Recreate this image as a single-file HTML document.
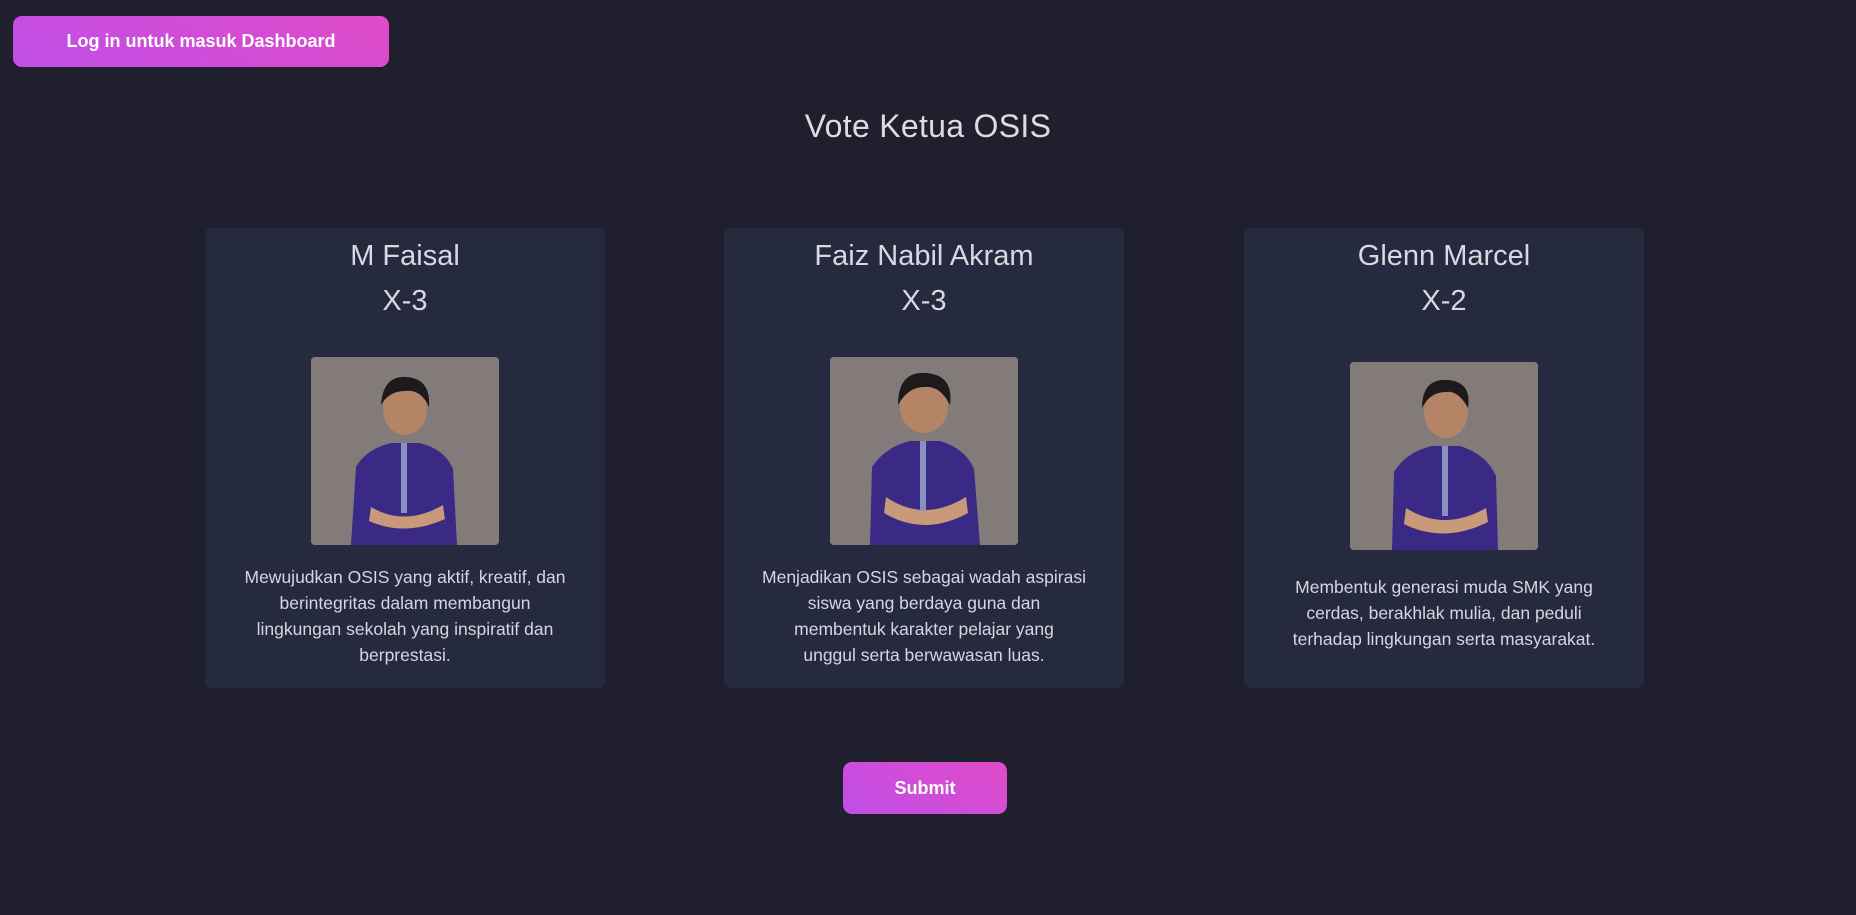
<!DOCTYPE html>
<html><head><meta charset="utf-8"><style>
*{margin:0;padding:0;box-sizing:border-box}
body{width:1856px;height:915px;background:#1f1f2e;font-family:"Liberation Sans",sans-serif;position:relative;overflow:hidden;color:#d8d8e0}
.btn{position:absolute;background:linear-gradient(30deg,#c04ee8,#e04bc8);color:#fff;font-weight:bold;border-radius:9px;display:flex;align-items:center;justify-content:center}
.login{left:13px;top:16px;width:376px;height:51px;font-size:18px}
.submit{left:843px;top:762px;width:164px;height:52px;font-size:18px}
h1{position:absolute;top:108px;left:0;width:1856px;text-align:center;font-weight:normal;font-size:32px;color:#dcdce4;letter-spacing:.3px}
.card{position:absolute;top:228px;width:400px;height:460px;background:#252a3e;border-radius:6px;text-align:center}
.nm{position:absolute;top:6px;width:100%;font-size:29px;line-height:45px}
.ph{position:absolute;left:106px;width:188px;height:188px;border-radius:4px;overflow:hidden;background:#837b79}
.ds{position:absolute;width:100%;font-size:17.5px;line-height:26px;color:#d6d6de}
</style></head><body>
<div class="btn login">Log in untuk masuk Dashboard</div>
<h1>Vote Ketua OSIS</h1>

<div class="card" style="left:205px">
<div class="nm">M Faisal<br>X-3</div>
<div class="ph" style="top:129px"><svg width="188" height="188" viewBox="0 0 188 188"><rect width="188" height="188" fill="#837b79"/><path d="M40 188 L45 110 Q55 92 80 86 L108 86 Q134 92 142 112 L146 188Z" fill="#3a2a86"/><path d="M60 150 Q94 170 132 148 L134 162 Q94 180 58 164Z" fill="#c99a7a"/><ellipse cx="94" cy="52" rx="22" ry="26" fill="#b58466"/><path d="M70 48 Q72 18 96 20 Q120 22 118 50 Q110 32 94 34 Q78 34 70 48Z" fill="#1c1a1c"/><rect x="90" y="86" width="6" height="70" fill="#8890c0"/></svg></div>
<div class="ds" style="top:336px">Mewujudkan OSIS yang aktif, kreatif, dan<br>berintegritas dalam membangun<br>lingkungan sekolah yang inspiratif dan<br>berprestasi.</div>
</div>

<div class="card" style="left:724px">
<div class="nm">Faiz Nabil Akram<br>X-3</div>
<div class="ph" style="top:129px"><svg width="188" height="188" viewBox="0 0 188 188"><rect width="188" height="188" fill="#837b79"/><path d="M40 188 L42 110 Q55 90 80 84 L110 84 Q136 92 144 112 L150 188Z" fill="#3a2a86"/><path d="M56 140 Q94 166 136 140 L138 156 Q94 180 54 156Z" fill="#c99a7a"/><ellipse cx="94" cy="50" rx="24" ry="26" fill="#b58466"/><path d="M68 48 Q68 14 96 16 Q124 18 120 48 Q110 28 94 30 Q78 30 68 48Z" fill="#1c1a1c"/><rect x="90" y="84" width="6" height="70" fill="#8890c0"/></svg></div>
<div class="ds" style="top:336px">Menjadikan OSIS sebagai wadah aspirasi<br>siswa yang berdaya guna dan<br>membentuk karakter pelajar yang<br>unggul serta berwawasan luas.</div>
</div>

<div class="card" style="left:1244px">
<div class="nm">Glenn Marcel<br>X-2</div>
<div class="ph" style="top:134px"><svg width="188" height="188" viewBox="0 0 188 188"><rect width="188" height="188" fill="#837b79"/><path d="M42 188 L44 110 Q56 90 82 84 L110 84 Q136 92 146 114 L148 188Z" fill="#3a2a86"/><path d="M56 146 Q94 170 136 146 L138 160 Q94 182 54 162Z" fill="#c99a7a"/><ellipse cx="96" cy="50" rx="22" ry="26" fill="#b58466"/><path d="M72 46 Q72 16 98 18 Q122 20 118 46 Q108 28 96 30 Q80 30 72 46Z" fill="#1c1a1c"/><rect x="92" y="84" width="6" height="70" fill="#8890c0"/></svg></div>
<div class="ds" style="top:346px">Membentuk generasi muda SMK yang<br>cerdas, berakhlak mulia, dan peduli<br>terhadap lingkungan serta masyarakat.</div>
</div>

<div class="btn submit">Submit</div>
</body></html>
